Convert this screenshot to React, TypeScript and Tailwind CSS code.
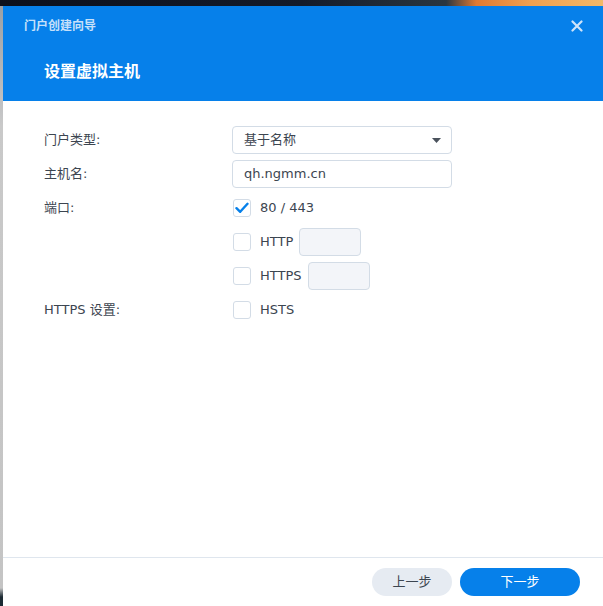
import React from "react";

const font = { fontFamily: '"DejaVu Sans", "Noto Sans CJK SC", sans-serif' };

function Box({ checked = false }: { checked?: boolean }) {
  return (
    <div className="w-[18px] h-[18px] shrink-0 rounded-[3px] border border-[#d3dce6] bg-white flex items-center justify-center">
      {checked && (
        <svg width="14" height="12" viewBox="0 0 14 12">
          <path d="M1.5 6.2 L5.2 9.8 L12.5 1.8" fill="none" stroke="#0680ea" strokeWidth="2.4" strokeLinecap="round" strokeLinejoin="round" />
        </svg>
      )}
    </div>
  );
}

function Row({ label, children }: { label?: string; children: React.ReactNode }) {
  return (
    <div className="flex items-center h-[28px]">
      <div className="w-[188px] shrink-0 text-[13px] text-[#3c4550]">{label}</div>
      <div className="flex items-center">{children}</div>
    </div>
  );
}

export default function App() {
  return (
    <div className="w-[603px] h-[606px] flex flex-col overflow-hidden" style={font}>
      <div className="h-[6px] shrink-0 bg-[linear-gradient(90deg,#0c101c_0%,#141b2a_50%,#2a3640_74%,#e07a32_79%,#f0a050_88%,#f2b868_100%)]" />
      <div className="flex flex-1 min-h-0">
        <div className="w-[3px] shrink-0 bg-[linear-gradient(180deg,#9aa0a6_0%,#c9c9c9_20%,#c4c4c4_97%,#1c2a33_98.5%)]" />
        <div className="flex-1 flex flex-col bg-white">
          <div className="h-[95px] shrink-0 bg-[#0680ea] flex flex-col">
            <div className="h-[38px] flex items-center justify-between pl-[21px] pr-[20px] pt-[1px]">
              <span className="text-[12px] font-bold text-[#c6e0fa]">门户创建向导</span>
              <svg width="12" height="12" viewBox="0 0 12 12">
                <path d="M1.5 1.5 L10.5 10.5 M10.5 1.5 L1.5 10.5" stroke="#cfe4fa" strokeWidth="2.2" strokeLinecap="round" />
              </svg>
            </div>
            <div className="pl-[41px] pt-[16px] text-[16px] font-bold text-white">设置虚拟主机</div>
          </div>
          <div className="flex-1 pl-[41px] pt-[25px] flex flex-col gap-[6px]">
            <Row label="门户类型:">
              <div className="w-[220px] h-[28px] rounded-[4px] border border-[#d3dce6] flex items-center justify-between pl-[11px] pr-[10px] text-[13px] text-[#3c4550]">
                <span>基于名称</span>
                <svg width="9" height="5" viewBox="0 0 9 5">
                  <path d="M0 0 L9 0 L4.5 5 Z" fill="#4a525c" />
                </svg>
              </div>
            </Row>
            <Row label="主机名:">
              <div className="w-[220px] h-[28px] rounded-[4px] border border-[#d3dce6] flex items-center pl-[11px] text-[13px] text-[#3c4550]">
                qh.ngmm.cn
              </div>
            </Row>
            <Row label="端口:">
              <div className="pl-[1px] flex items-center gap-[9px]">
                <Box checked />
                <span className="text-[13px] text-[#3c4550]">80 / 443</span>
              </div>
            </Row>
            <Row>
              <div className="pl-[1px] flex items-center gap-[9px]">
                <Box />
                <span className="text-[13px] text-[#3c4550]">HTTP</span>
                <div className="w-[62px] h-[28px] rounded-[4px] border border-[#d3dce6] bg-[#f3f5f9] -ml-[3px]" />
              </div>
            </Row>
            <Row>
              <div className="pl-[1px] flex items-center gap-[9px]">
                <Box />
                <span className="text-[13px] text-[#3c4550]">HTTPS</span>
                <div className="w-[62px] h-[28px] rounded-[4px] border border-[#d3dce6] bg-[#f3f5f9] -ml-[3px]" />
              </div>
            </Row>
            <Row label="HTTPS 设置:">
              <div className="pl-[1px] flex items-center gap-[9px]">
                <Box />
                <span className="text-[13px] text-[#3c4550]">HSTS</span>
              </div>
            </Row>
          </div>
          <div className="h-[49px] shrink-0 border-t border-[#dfe6ee] flex items-start justify-end gap-[8px] pr-[23px] pt-[10px]">
            <button className="w-[80px] h-[28px] rounded-full bg-[#e6ebf2] text-[13px] text-[#3c4550]">上一步</button>
            <button className="w-[120px] h-[28px] rounded-full bg-[#0680ea] text-[13px] text-white">下一步</button>
          </div>
        </div>
      </div>
    </div>
  );
}
